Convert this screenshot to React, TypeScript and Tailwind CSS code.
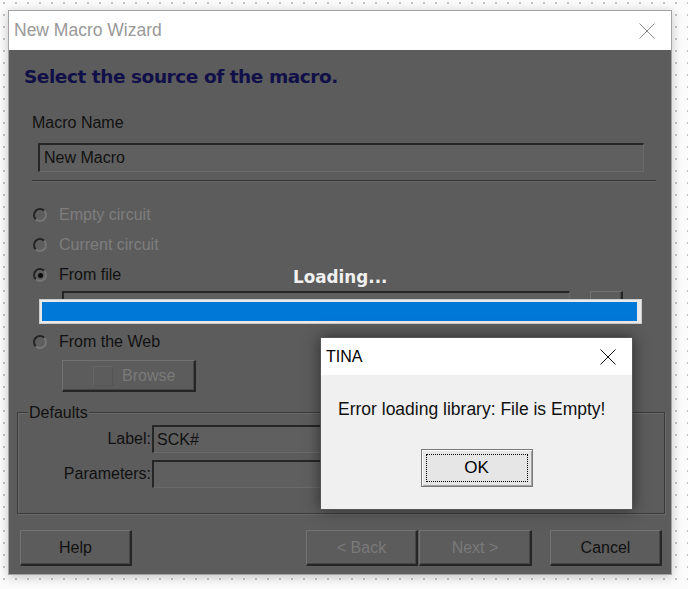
import React from 'react';

function Radio({ checked }: { checked?: boolean }) {
  return (
    <span className="w-[14px] h-[14px] shrink-0 rounded-full border-2 border-t-[#242424] border-l-[#242424] border-b-[#757575] border-r-[#757575] bg-[#5e5e5e] flex items-center justify-center">
      {checked && <span className="w-[5px] h-[5px] rounded-full bg-[#0a0a0a]" />}
    </span>
  );
}

function RadioRow({ label, checked, disabled, className }: { label: string; checked?: boolean; disabled?: boolean; className: string }) {
  return (
    <div className={`flex items-center h-[18px] ml-[24px] ${className}`}>
      <Radio checked={checked} />
      <span className={`ml-[12px] text-[16px] leading-[18px] ${disabled ? 'text-[#7e7e7e]' : 'text-[#111]'}`}>{label}</span>
    </div>
  );
}

function WinButton({ children, disabled, className }: { children?: React.ReactNode; disabled?: boolean; className?: string }) {
  return (
    <div
      className={`h-[36px] flex items-center justify-center border-t border-l border-t-[#737373] border-l-[#737373] border-r-2 border-b-2 border-r-[#262626] border-b-[#262626] bg-[#5c5c5c] shadow-[inset_-1px_-1px_0_#464646] text-[16px] ${disabled ? 'text-[#7a7a7a]' : 'text-[#111]'} ${className ?? ''}`}
    >
      {children}
    </div>
  );
}

function Sunken({ children, className }: { children?: React.ReactNode; className: string }) {
  return (
    <div className={`flex items-center border-t-2 border-l-2 border-t-[#262626] border-l-[#262626] border-b border-r border-b-[#6a6a6a] border-r-[#6a6a6a] bg-[#5f5f5f] text-[16px] text-[#111] ${className}`}>
      {children}
    </div>
  );
}

export default function App() {
  return (
    <div className="w-[688px] h-[589px] overflow-hidden bg-[#fbfbfb] bg-[radial-gradient(circle,#c4c4c4_1px,transparent_1.5px)] bg-[length:12px_12px] bg-[position:-2px_-3px] pt-[10px] pl-[8px] font-['Liberation_Sans',Arial,sans-serif]">
      {/* Wizard window */}
      <div className="relative w-[664px] h-[565px] border border-[#a3a3a3] bg-[#5c5c5c] flex flex-col shadow-[0_2px_10px_rgba(0,0,0,0.22)]">
        <div className="h-[39px] shrink-0 bg-white flex items-center justify-between pl-[5px] pr-[16px]">
          <span className="text-[17.5px] text-[#999]">New Macro Wizard</span>
          <svg width="16" height="16" viewBox="0 0 16 16">
            <path d="M0.5 0.5L15.5 15.5M15.5 0.5L0.5 15.5" stroke="#8c8c8c" strokeWidth="1" fill="none" />
          </svg>
        </div>

        <div className="flex-1 flex flex-col">
          <h1 className="mt-[16px] ml-[15px] h-[22px] leading-[22px] font-['DejaVu_Sans',sans-serif] font-bold text-[18.5px] tracking-[-0.45px] text-[#100f48]">
            Select the source of the macro.
          </h1>

          <div className="mt-[26px] ml-[23px] text-[16px] leading-[18px] text-[#111]">Macro Name</div>
          <Sunken className="mt-[11px] ml-[29px] w-[606px] h-[29px] pl-[4px]">New Macro</Sunken>
          <div className="mt-[8px] ml-[23px] w-[624px] h-[2px] border-t border-t-[#363636] border-b border-b-[#676767]" />

          <RadioRow label="Empty circuit" disabled className="mt-[24px]" />
          <RadioRow label="Current circuit" disabled className="mt-[12px]" />
          <RadioRow label="From file" checked className="mt-[12px]" />

          <div className="mt-[7px] ml-[53px] flex">
            <Sunken className="w-[508px] h-[29px]" />
            <WinButton className="ml-[20px] w-[33px] !h-[29px]" />
          </div>

          <RadioRow label="From the Web" className="mt-[13px]" />

          <WinButton disabled className="mt-[9px] ml-[53px] w-[134px] !h-[32px] !justify-start pl-[30px]">
            <span className="w-[20px] h-[20px] border-t border-l border-t-[#666] border-l-[#666] border-b border-r border-b-[#545454] border-r-[#545454]" />
            <span className="ml-[9px]">Browse</span>
          </WinButton>

          {/* Defaults group */}
          <div className="relative mt-[20px] ml-[8px] w-[648px] h-[102px] border border-[#3b3b3b] shadow-[inset_1px_1px_0_#6a6a6a,1px_1px_0_#6a6a6a]">
            <span className="absolute -top-[9px] left-[10px] px-[1px] bg-[#5c5c5c] text-[16px] leading-[18px] text-[#111]">Defaults</span>
            <div className="mt-[12px] grid grid-cols-[133px_448px] gap-y-[7px] items-center text-[16px] text-[#111]">
              <span className="text-right">Label:</span>
              <Sunken className="ml-[1px] h-[28px] pl-[3px]">SCK#</Sunken>
              <span className="text-right">Parameters:</span>
              <Sunken className="ml-[1px] h-[28px]" />
            </div>
          </div>

          <div className="mt-[16px] flex pl-[11px] pr-[9px]">
            <WinButton className="w-[112px]">Help</WinButton>
            <div className="flex-1" />
            <WinButton disabled className="w-[112px]">{'< Back'}</WinButton>
            <WinButton disabled className="ml-[1px] w-[113px]">{'Next >'}</WinButton>
            <WinButton className="ml-[18px] w-[112px]">Cancel</WinButton>
          </div>
        </div>

        {/* Loading overlay */}
        <span className="absolute left-[284px] top-[256px] font-['DejaVu_Sans',sans-serif] font-bold text-[16.8px] leading-[20px] text-[#f0f0f0]">
          Loading...
        </span>
        <div className="absolute left-[30px] top-[288px] w-[603px] h-[25px] border border-[#cdcdcd] bg-[#e9e9e9] p-[2px]">
          <div className="w-[595px] h-full bg-[#0078d7]" />
        </div>

        {/* TINA message box */}
        <div className="absolute left-[311px] top-[326px] w-[313px] h-[173px] border border-[#555] bg-[#f0f0f0] flex flex-col shadow-[0_0_14px_rgba(0,0,0,0.5)]">
          <div className="h-[37px] shrink-0 bg-white flex items-center justify-between pl-[5px] pr-[16px]">
            <span className="text-[16px] text-black">TINA</span>
            <svg width="16" height="16" viewBox="0 0 16 16">
              <path d="M0.5 0.5L15.5 15.5M15.5 0.5L0.5 15.5" stroke="#111" strokeWidth="1" fill="none" />
            </svg>
          </div>
          <p className="mt-[24px] pl-[17px] text-[17.5px] leading-[20px] text-[#111]">Error loading library: File is Empty!</p>
          <div className="mt-[30px] self-center w-[112px] h-[38px] border border-[#7a7a7a] bg-[#e6e6e6] p-[4px] shadow-[inset_1px_1px_0_#fff,inset_-1px_-1px_0_#a3a3a3]">
            <div className="w-full h-full border border-dotted border-black flex items-center justify-center text-[17px] text-black">OK</div>
          </div>
        </div>
      </div>
    </div>
  );
}
